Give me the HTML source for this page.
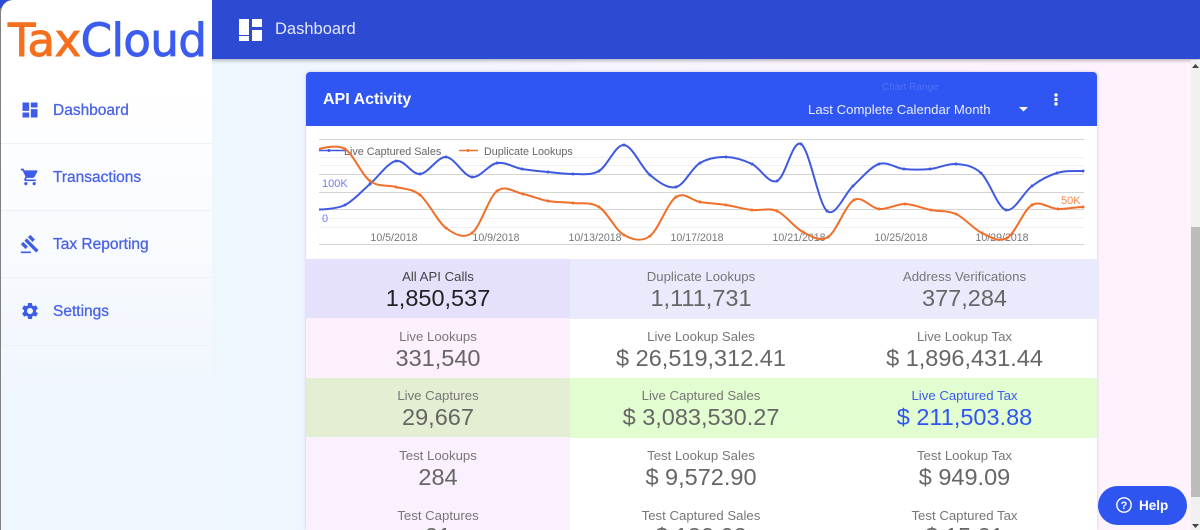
<!DOCTYPE html>
<html><head><meta charset="utf-8"><style>
html,body{margin:0;padding:0;width:1200px;height:530px;overflow:hidden}
body{position:relative;font-family:"Liberation Sans",sans-serif;background:linear-gradient(90deg,#eef6fe 212px,#f6f4fd 600px,#fef2fc 1100px)}
div{position:absolute}
.top{left:0;top:0;width:1200px;height:59px;background:#2c4bd2;box-shadow:0 1px 4px rgba(0,0,0,.35)}
.side{left:1px;top:0;width:211px;height:530px;background:linear-gradient(180deg,#fff 90px,#f0f6fe 400px);border-top-left-radius:12px}
.edge{left:0;top:8px;width:1px;height:522px;background:#808080}
.logo{left:8px;top:15px;font-family:"DejaVu Sans",sans-serif;font-size:45px;line-height:52px;letter-spacing:-.55px;font-weight:400;-webkit-text-stroke:.9px;white-space:nowrap;color:#3c5cf0}
.logo span{color:#f4701e}
.nav{left:53px;font-size:15.5px;line-height:20px;color:#4a63e6;-webkit-text-stroke:.3px #4a63e6;white-space:nowrap}
.div{left:1px;width:211px;height:1px;background:#eef1f8}
.ic{left:20px;width:20px;height:20px}
.card{left:306px;top:72px;width:791px;height:458px;background:#fff;box-shadow:0 0 3px rgba(80,80,160,.25);border-radius:3px 3px 0 0}
.chead{left:306px;top:72px;width:791px;height:54px;background:#2f55f2;border-radius:4px 4px 0 0}
.c{height:60px;text-align:center;overflow:hidden}
.l{left:0;right:0;top:9px;font-size:13.2px;line-height:17px;color:#777}
.v{left:0;right:0;top:26px;font-size:23.5px;line-height:28px;color:#666}
</style></head><body>
<div class="top"></div>
<svg style="position:absolute;left:239px;top:19px" width="23" height="22"><path fill="#fff" d="M0 0h10v16H0zM0 17h10v5H0zM13 0h10v8H13zM13 11h10v11H13z"/></svg>
<div style="left:275px;top:19px;font-size:16.5px;line-height:20px;color:#e2e8fb">Dashboard</div>
<svg style="position:absolute;left:0;top:0" width="14" height="14"><path fill="#2c4bd2" d="M0 0h13C7 2 3 5 0 10z"/></svg>
<div class="edge"></div>
<div class="side"></div>
<div class="logo"><span>Tax</span>Cloud</div>
<div class="nav" style="top:101px">Dashboard</div>
<div class="nav" style="top:168px">Transactions</div>
<div class="nav" style="top:235px">Tax Reporting</div>
<div class="nav" style="top:302px">Settings</div>
<div class="div" style="top:143px"></div><div class="div" style="top:210px"></div><div class="div" style="top:277px"></div><div class="div" style="top:345px"></div>
<svg class="ic" style="position:absolute;top:100px" viewBox="0 0 24 24"><path fill="#3f5ce8" d="M3 13h8V3H3v10zm0 8h8v-6H3v6zm10 0h8V11h-8v10zm0-18v6h8V3h-8z"/></svg>
<svg class="ic" style="position:absolute;top:167px" viewBox="0 0 24 24"><path fill="#3f5ce8" d="M7 18c-1.1 0-1.99.9-1.99 2S5.9 22 7 22s2-.9 2-2-.9-2-2-2zM1 2v2h2l3.6 7.59-1.35 2.45c-.16.28-.25.61-.25.96 0 1.1.9 2 2 2h12v-2H7.42c-.14 0-.25-.11-.25-.25l.03-.12.9-1.63h7.45c.75 0 1.41-.41 1.75-1.03l3.58-6.49c.08-.14.12-.31.12-.48 0-.55-.45-1-1-1H5.21l-.94-2H1zm16 16c-1.1 0-1.99.9-1.99 2s.89 2 1.99 2 2-.9 2-2-.9-2-2-2z"/></svg>
<svg class="ic" style="position:absolute;top:234px" viewBox="0 0 24 24"><path fill="#3f5ce8" d="M1 21h12v2H1zM5.245 8.07l2.83-2.827 14.14 14.142-2.828 2.828zM12.317 1l5.657 5.656-2.83 2.83-5.654-5.66zM3.825 9.485l5.657 5.657-2.828 2.828-5.657-5.657z"/></svg>
<svg class="ic" style="position:absolute;top:301px" viewBox="0 0 24 24"><path fill="#3f5ce8" d="M19.14 12.94c.04-.3.06-.61.06-.94 0-.32-.02-.64-.07-.94l2.03-1.58c.18-.14.23-.41.12-.61l-1.92-3.32c-.12-.22-.37-.29-.59-.22l-2.39.96c-.5-.38-1.03-.7-1.62-.94l-.36-2.54c-.04-.24-.24-.41-.48-.41h-3.84c-.24 0-.43.17-.47.41l-.36 2.54c-.59.24-1.13.57-1.62.94l-2.39-.96c-.22-.08-.47 0-.59.22L2.74 8.87c-.12.21-.08.47.12.61l2.03 1.58c-.05.3-.09.63-.09.94s.02.64.07.94l-2.03 1.58c-.18.14-.23.41-.12.61l1.92 3.32c.12.22.37.29.59.22l2.39-.96c.5.38 1.03.7 1.62.94l.36 2.54c.05.24.24.41.48.41h3.84c.24 0 .44-.17.47-.41l.36-2.54c.59-.24 1.13-.56 1.62-.94l2.39.96c.22.08.47 0 .59-.22l1.92-3.32c.12-.22.07-.47-.12-.61l-2.01-1.58zM12 15.6c-1.98 0-3.6-1.62-3.6-3.6s1.62-3.6 3.6-3.6 3.6 1.62 3.6 3.6-1.62 3.6-3.6 3.6z"/></svg>

<div class="card"></div>
<div class="chead"></div>
<div style="left:323px;top:90px;font-size:16px;line-height:20px;font-weight:bold;color:#fff">API Activity</div>
<div style="left:882px;top:82px;font-size:10px;line-height:12px;color:#4f70f6">Chart Range</div>
<div style="left:808px;top:102px;font-size:13.2px;line-height:16px;color:#e8edfe;white-space:nowrap">Last Complete Calendar Month</div>
<svg style="position:absolute;left:1015px;top:101px" width="50" height="16" viewBox="0 0 50 16"><path fill="#fff" d="M4 6h9l-4.500 4.500z"/></svg>
<svg style="position:absolute;left:1052px;top:92px" width="8" height="16"><circle cx="4" cy="3" r="1.700" fill="#fff"/><circle cx="4" cy="7.500" r="1.700" fill="#fff"/><circle cx="4" cy="12" r="1.700" fill="#fff"/></svg>

<svg style="position:absolute;left:0;top:0" width="1200" height="530" font-family="Liberation Sans, sans-serif">
<g stroke="#d4d4d4" stroke-width="1"><path d="M319 139.500H1084M319 174.500H1084M319 192.500H1084M319 209.500H1084M319 244.500H1084"/></g>
<g stroke="#efefef" stroke-width="1"><path d="M319 157.500H1084M319 165.500H1084M319 218.500H1084M319 227.500H1084"/></g>
<g font-size="10.6" fill="#777" text-anchor="middle"><text x="394" y="241">10/5/2018</text><text x="496" y="241">10/9/2018</text><text x="595" y="241">10/13/2018</text><text x="697" y="241">10/17/2018</text><text x="799" y="241">10/21/2018</text><text x="901" y="241">10/25/2018</text><text x="1002" y="241">10/29/2018</text></g>
<text x="322" y="187" font-size="11" fill="#6f7cf0">100K</text><text x="322" y="222" font-size="11" fill="#6f7cf0">0</text>
<text x="1061" y="204" font-size="11" fill="#f08a4a">50K</text>
<text x="344" y="155" font-size="10.800" fill="#666">Live Captured Sales</text><text x="484" y="155" font-size="10.800" fill="#666">Duplicate Lookups</text>
<path d="M319 150.500H345" stroke="#3f5ae0" stroke-width="1.600" fill="none"/><circle cx="329" cy="150.500" r="1.500" fill="#3f5ae0"/>
<path d="M459 150.500H478" stroke="#f0702c" stroke-width="1.600" fill="none"/><circle cx="468" cy="150.500" r="1.500" fill="#f0702c"/>
<path fill="none" stroke="#3f5ae0" stroke-width="2" d="M319 209.500S336.500 209.250 345 205S361.500 191.300 370 184S387.500 162.700 396 161S411.500 174.700 420 174S437.500 156.500 446 157S463.500 176 472 177S488.500 164.300 497 163S513.500 167.500 522 169S539.500 171.200 548 172S564.500 174.200 573 174S590.500 175.800 599 171S615.500 144.300 624 145S641.500 168 650 175S667.500 189 676 187S691.500 168 700 163S717.500 156.800 726 157S743.500 160 752 164S768.500 184.300 777 181S792.500 139 801 144S818.500 204 827 211S844.500 193.800 853 186S870.500 166.800 879 164S895.500 168.200 904 169S921.500 169.800 930 169S947.500 163.300 956 164S972.500 165.300 981 173S997.500 207.800 1006 210S1023.500 192.200 1032 186S1048.500 175.500 1057 173S1074.500 171 1083 171"/>
<path fill="none" stroke="#ef6f2b" stroke-width="2" d="M319 149S336.500 143.700 345 149S361.500 174.700 370 181S387.500 184.700 396 187S411.500 188.200 420 195S437.500 221.700 446 228S463.500 239.200 472 233S488.500 197.500 497 191S514.500 192.300 523 194S539.500 199.500 548 201S564.500 202 573 203S590.500 201.700 599 207S615.500 230.200 624 235S641.500 242.300 650 236S667.500 202.700 676 197S691.500 200.700 700 202S717.500 203.700 726 205S743.500 209 752 210S768.500 207.300 777 211S794.500 227.700 803 232S819.500 242.300 828 237S845.500 204.700 854 200S870.500 208.300 879 209S896.500 203.800 905 204S922.500 208.300 931 210S947.500 210.200 956 214S973.500 229 982 233S998.500 242.700 1007 238S1023.500 209.800 1032 205S1049.500 208.700 1058 209S1074.500 207 1083 207"/>
<g fill="#3f5ae0"><circle cx="345" cy="205" r="1.500"/><circle cx="370" cy="184" r="1.500"/><circle cx="396" cy="161" r="1.500"/><circle cx="420" cy="174" r="1.500"/><circle cx="446" cy="157" r="1.500"/><circle cx="472" cy="177" r="1.500"/><circle cx="497" cy="163" r="1.500"/><circle cx="522" cy="169" r="1.500"/><circle cx="548" cy="172" r="1.500"/><circle cx="573" cy="174" r="1.500"/><circle cx="599" cy="171" r="1.500"/><circle cx="624" cy="145" r="1.500"/><circle cx="650" cy="175" r="1.500"/><circle cx="676" cy="187" r="1.500"/><circle cx="700" cy="163" r="1.500"/><circle cx="726" cy="157" r="1.500"/><circle cx="752" cy="164" r="1.500"/><circle cx="777" cy="181" r="1.500"/><circle cx="801" cy="144" r="1.500"/><circle cx="827" cy="211" r="1.500"/><circle cx="853" cy="186" r="1.500"/><circle cx="879" cy="164" r="1.500"/><circle cx="904" cy="169" r="1.500"/><circle cx="930" cy="169" r="1.500"/><circle cx="956" cy="164" r="1.500"/><circle cx="981" cy="173" r="1.500"/><circle cx="1006" cy="210" r="1.500"/><circle cx="1032" cy="186" r="1.500"/><circle cx="1057" cy="173" r="1.500"/><circle cx="1083" cy="171" r="1.500"/></g>
<g fill="#ef6f2b"><circle cx="345" cy="149" r="1.500"/><circle cx="370" cy="181" r="1.500"/><circle cx="396" cy="187" r="1.500"/><circle cx="420" cy="195" r="1.500"/><circle cx="446" cy="228" r="1.500"/><circle cx="472" cy="233" r="1.500"/><circle cx="497" cy="191" r="1.500"/><circle cx="523" cy="194" r="1.500"/><circle cx="548" cy="201" r="1.500"/><circle cx="573" cy="203" r="1.500"/><circle cx="599" cy="207" r="1.500"/><circle cx="624" cy="235" r="1.500"/><circle cx="650" cy="236" r="1.500"/><circle cx="676" cy="197" r="1.500"/><circle cx="700" cy="202" r="1.500"/><circle cx="726" cy="205" r="1.500"/><circle cx="752" cy="210" r="1.500"/><circle cx="777" cy="211" r="1.500"/><circle cx="803" cy="232" r="1.500"/><circle cx="828" cy="237" r="1.500"/><circle cx="854" cy="200" r="1.500"/><circle cx="879" cy="209" r="1.500"/><circle cx="905" cy="204" r="1.500"/><circle cx="931" cy="210" r="1.500"/><circle cx="956" cy="214" r="1.500"/><circle cx="982" cy="233" r="1.500"/><circle cx="1007" cy="238" r="1.500"/><circle cx="1032" cy="205" r="1.500"/><circle cx="1058" cy="209" r="1.500"/><circle cx="1083" cy="207" r="1.500"/></g>
</svg>

<div class="c" style="left:306px;top:259px;width:264px;background:#e5e0fc"><div class="l" style="color:#444">All API Calls</div><div class="v" style="color:#222;top:25px">1,850,537</div></div>
<div class="c" style="left:570px;top:259px;width:262px;background:#e9ebfd"><div class="l">Duplicate Lookups</div><div class="v" style="top:25px">1,111,731</div></div>
<div class="c" style="left:832px;top:259px;width:265px;background:#e9ebfd"><div class="l">Address Verifications</div><div class="v" style="top:25px">377,284</div></div>

<div class="c" style="left:306px;top:318px;width:264px;background:#fdf0fd"><div class="l" style="top:10px">Live Lookups</div><div class="v">331,540</div></div>
<div class="c" style="left:570px;top:318px;width:262px"><div class="l" style="top:10px">Live Lookup Sales</div><div class="v">$ 26,519,312.41</div></div>
<div class="c" style="left:832px;top:318px;width:265px"><div class="l" style="top:10px">Live Lookup Tax</div><div class="v">$ 1,896,431.44</div></div>

<div class="c" style="left:306px;top:378px;width:264px;background:#e3eed2"><div class="l">Live Captures</div><div class="v" style="top:25px">29,667</div></div>
<div class="c" style="left:570px;top:378px;width:262px;background:#e2fdcf"><div class="l">Live Captured Sales</div><div class="v" style="top:25px">$ 3,083,530.27</div></div>
<div class="c" style="left:832px;top:378px;width:265px;background:#e2fdcf"><div class="l" style="color:#3a5cf0">Live Captured Tax</div><div class="v" style="color:#2f55f0;top:25px">$ 211,503.88</div></div>

<div class="c" style="left:306px;top:437px;width:264px;height:93px;background:#fbf0fe"><div class="l" style="top:10px">Test Lookups</div><div class="v">284</div><div class="l" style="top:70px">Test Captures</div><div class="v" style="top:85px">21</div></div>
<div class="c" style="left:570px;top:437px;width:262px;height:93px"><div class="l" style="top:10px">Test Lookup Sales</div><div class="v">$ 9,572.90</div><div class="l" style="top:70px">Test Captured Sales</div><div class="v" style="top:85px">$ 130.02</div></div>
<div class="c" style="left:832px;top:437px;width:265px;height:93px"><div class="l" style="top:10px">Test Lookup Tax</div><div class="v">$ 949.09</div><div class="l" style="top:70px">Test Captured Tax</div><div class="v" style="top:85px">$ 15.21</div></div>

<div style="left:1191px;top:60px;width:9px;height:470px;background:#f0f0f0"></div>
<div style="left:1191px;top:227px;width:9px;height:270px;background:#bcbcbc"></div>
<svg style="position:absolute;left:1191px;top:60px" width="9" height="470"><path fill="#444" d="M1 8h7L4.500 4zM1 464h7l-3.500 4z"/></svg>

<div style="left:1098px;top:486px;width:89px;height:39px;border-radius:20px;background:#2e55f0"></div>
<svg style="position:absolute;left:1115px;top:496px" width="18" height="18" viewBox="0 0 18 18" font-family="Liberation Sans, sans-serif"><circle cx="9" cy="9" r="7.200" fill="none" stroke="#fff" stroke-width="1.400"/><text x="9" y="13" font-size="11" font-weight="bold" fill="#fff" text-anchor="middle">?</text></svg>
<div style="left:1139px;top:497px;font-size:13.5px;line-height:17px;font-weight:bold;color:#fff">Help</div>
</body></html>
